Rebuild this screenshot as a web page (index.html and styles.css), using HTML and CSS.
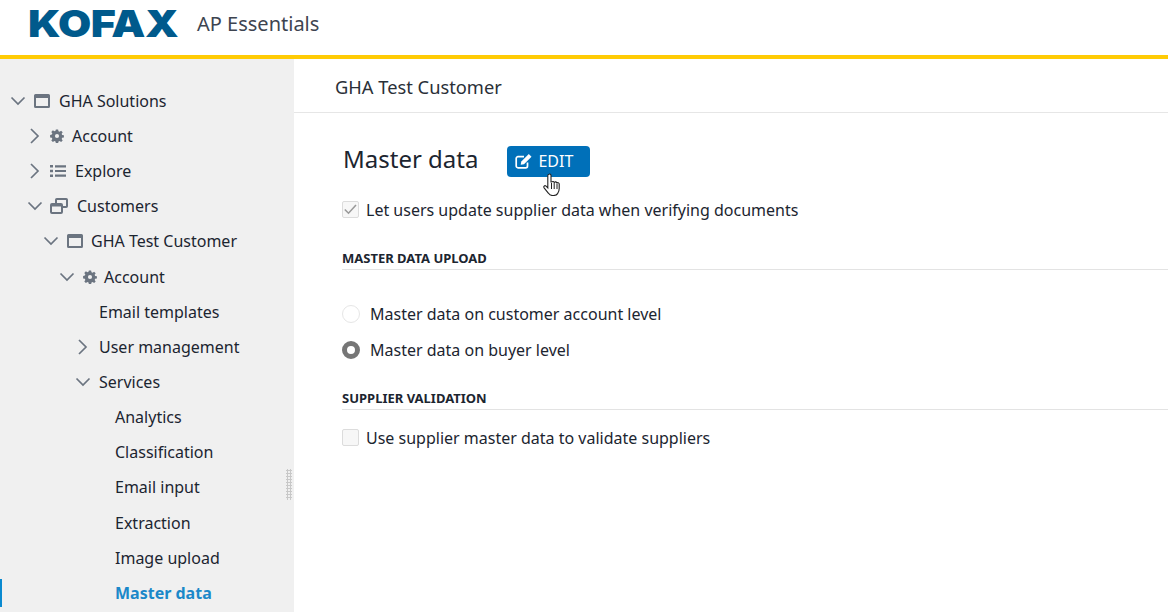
FILE: index.html
```html
<!DOCTYPE html>
<html lang="en">
<head>
<meta charset="utf-8">
<title>AP Essentials</title>
<link rel="stylesheet" href="styles.css">
</head>
<body>
<svg class="defs" width="0" height="0" aria-hidden="true">
  <symbol id="down" viewBox="0 0 16 16"><path d="M1.500 4.500 8 11l6.500-6.500" fill="none" stroke="#6b7480" stroke-width="1.700"/></symbol>
  <symbol id="right" viewBox="0 0 16 16"><path d="M4 1 11 8l-7 7" fill="none" stroke="#6b7480" stroke-width="1.700"/></symbol>
  <symbol id="win" viewBox="0 0 16 14"><path fill-rule="evenodd" d="M1.500 0h13A1.500 1.500 0 0 1 16 1.500v11a1.500 1.500 0 0 1-1.500 1.500h-13A1.500 1.500 0 0 1 0 12.500v-11A1.500 1.500 0 0 1 1.500 0zM2 4v8h12V4z" fill="#6b7480"/></symbol>
  <symbol id="gear" viewBox="-.5 -.5 15 15"><path fill-rule="evenodd" d="M5.800 0h2.400l.4 1.900 1.200.5 1.600-1.100 1.700 1.700-1.100 1.600.5 1.200 1.900.4v2.400l-1.900.4-.5 1.200 1.100 1.600-1.700 1.700-1.600-1.100-1.200.5-.4 1.900H5.800l-.4-1.900-1.200-.5-1.600 1.100-1.700-1.700 1.100-1.600-.5-1.200-1.900-.4V5.800l1.900-.4.5-1.200-1.100-1.600 1.700-1.700 1.600 1.100 1.200-.5zM7 4.800a2.200 2.200 0 1 0 0 4.400 2.200 2.200 0 0 0 0-4.400z" fill="#6b7480"/></symbol>
  <symbol id="list" viewBox="0 0 16 12"><path d="M0 0h3v2.600H0zM0 4.700h3v2.600H0zM0 9.400h3V12H0zM5 .2h11v2.200H5zM5 4.900h11v2.200H5zM5 9.600h11v2.200H5z" fill="#6b7480"/></symbol>
  <symbol id="copy" viewBox="0 0 18 16"><path d="M6 5V1.800A.800.800 0 0 1 6.800 1h9.400a.800.800 0 0 1 .8.800v6.400a.800.800 0 0 1-.8.800H12" fill="none" stroke="#6b7480" stroke-width="2"/><rect x="1" y="6" width="11" height="9" rx="1" fill="none" stroke="#6b7480" stroke-width="2"/><path d="M1 6h11v2.500H1z" fill="#6b7480"/></symbol>
</svg>

<header class="topbar">
  <span class="logo">KOFAX</span>
  <span class="product">AP Essentials</span>
</header>

<div class="layout">
  <nav class="sidebar">
    <div class="row d0"><svg class="chev"><use href="#down"/></svg><svg class="ico win"><use href="#win"/></svg><span>GHA Solutions</span></div>
    <div class="row d1"><svg class="chev"><use href="#right"/></svg><svg class="ico gear"><use href="#gear"/></svg><span>Account</span></div>
    <div class="row d1"><svg class="chev"><use href="#right"/></svg><svg class="ico list"><use href="#list"/></svg><span>Explore</span></div>
    <div class="row d1"><svg class="chev"><use href="#down"/></svg><svg class="ico copy"><use href="#copy"/></svg><span>Customers</span></div>
    <div class="row d2"><svg class="chev"><use href="#down"/></svg><svg class="ico win"><use href="#win"/></svg><span>GHA Test Customer</span></div>
    <div class="row d3"><svg class="chev"><use href="#down"/></svg><svg class="ico gear"><use href="#gear"/></svg><span>Account</span></div>
    <div class="row d4 leaf"><span>Email templates</span></div>
    <div class="row d4"><svg class="chev"><use href="#right"/></svg><span>User management</span></div>
    <div class="row d4"><svg class="chev"><use href="#down"/></svg><span>Services</span></div>
    <div class="row d5"><span>Analytics</span></div>
    <div class="row d5"><span>Classification</span></div>
    <div class="row d5"><span>Email input</span></div>
    <div class="row d5"><span>Extraction</span></div>
    <div class="row d5"><span>Image upload</span></div>
    <div class="row d5 active"><span>Master data</span></div>
    <div class="grip"></div>
  </nav>

  <main class="main">
    <div class="crumb">GHA Test Customer</div>
    <div class="content">
      <div class="title-row">
        <h1>Master data</h1>
        <button class="edit" type="button">
          <svg class="edit-ico" viewBox="0 0 17 15"><path d="M12.500 8.500V12a1.800 1.800 0 0 1-1.800 1.800H3A1.800 1.800 0 0 1 1.200 12V4.500A1.800 1.800 0 0 1 3 2.700h6" fill="none" stroke="#fff" stroke-width="1.700"/><path d="M13.800 0 16.500 2.700 9 10.200l-3.300.6.600-3.300z" fill="#fff"/></svg>
          EDIT
        </button>
        <svg class="hand" viewBox="0 0 19 23"><path d="M6 1.200c1-.4 2 .2 2 1.300V9h.8c.6-.8 1.900-.7 2.300.2l.4.1c.7-.7 2-.5 2.300.5h.4c.9-.4 2 .2 2 1.200v4.500c0 2.500-.6 3.800-1.600 5.100-.8 1.200-2.200 1.900-4.100 1.900H9.500c-1.800 0-3-.8-4-2.200L1.100 14.800c-.9-1.300.5-2.800 2-1.700l1.700 1.700V2.600c0-.6.500-1.200 1.200-1.400z" fill="#fff" stroke="#222" stroke-width="1.100"/><path d="M8.500 10v6M11.200 10v6M14 10.500V16" stroke="#222" fill="none"/></svg>
      </div>

      <label class="check-row first"><span class="box checked"><svg viewBox="0 0 15 15"><path d="M1.800 7.500 5.500 11.200 13 3" fill="none" stroke="#9a9a9a" stroke-width="1.600"/></svg></span>Let users update supplier data when verifying documents</label>

      <h2 class="section upload">MASTER DATA UPLOAD</h2>
      <div class="radio-row r1"><span class="radio"></span>Master data on customer account level</div>
      <div class="radio-row r2"><span class="radio on"></span>Master data on buyer level</div>

      <h2 class="section validation">SUPPLIER VALIDATION</h2>
      <label class="check-row"><span class="box"></span>Use supplier master data to validate suppliers</label>
    </div>
  </main>
</div>
</body>
</html>
```
FILE: styles.css
```css
* { box-sizing: border-box; }
html, body { margin: 0; height: 100%; overflow: hidden; }
body { font-family: "Noto Sans", "Open Sans", sans-serif; font-size: 16px; color: #1c2530; background: #fff; }
.defs { position: absolute; }

.topbar { height: 59px; border-bottom: 4px solid #ffcb05; display: flex; align-items: center; padding: 0 0 8px 28px; background: #fff; }
.logo { font-family: Inter, sans-serif; font-weight: 900; font-size: 37px; line-height: 26px; color: #005a8c; width: 148px; display: inline-block; transform-origin: left center; transform: scaleX(1.16); letter-spacing: -.5px; }
.product { margin-left: 21px; font-size: 20px; color: #3d4450; }

.layout { display: flex; height: 553px; }
.sidebar { position: relative; width: 294px; flex: none; background: #f0f0f0; padding-top: 24.200px; overflow: hidden; }
.row { position: relative; height: 35.167px; display: flex; align-items: center; white-space: nowrap; }
.chev { width: 16px; height: 16px; flex: none; margin-right: 8px; }
.ico { flex: none; margin-right: 8px; }
.win { width: 16px; height: 14px; }
.gear { width: 14px; height: 14px; }
.list { width: 16px; height: 12px; margin-right: 9px; }
.copy { width: 18px; height: 16px; margin-right: 9px; }
.d0 { padding-left: 10px; }
.d0 .ico { margin-right: 9px; }
.d1 { padding-left: 27px; }
.d1 .ico { margin-left: -1px; }
.d2 { padding-left: 43px; }
.d3 { padding-left: 59px; }
.d3 .ico { margin-right: 7px; }
.d4 { padding-left: 75px; }
.d5 { padding-left: 115px; }
.leaf { padding-left: 99px; }
.active { font-weight: 700; color: #1b88c9; }
.active::before { content: ""; position: absolute; left: 0; top: 4px; width: 2px; height: 28px; background: #0a8ad0; }
.grip { position: absolute; left: 286px; top: 410px; width: 6px; height: 31px; background-image: radial-gradient(#c8c8c8 1px, transparent 1.200px); background-size: 3px 3px; }

.main { flex: 1; min-width: 0; }
.crumb { height: 53.500px; border-bottom: 1px solid #e6e6e6; padding: 14px 0 0 41px; font-size: 18.300px; line-height: 28px; color: #2a3038; }
.content { padding: 33px 0 0 48px; }
.title-row { position: relative; display: flex; align-items: flex-start; height: 32px; }
h1 { margin: 0 0 0 1px; font-size: 24px; font-weight: 400; line-height: 26px; color: #1c2530; }
.edit { margin-left: 29px; width: 83px; height: 31px; border: 0; border-radius: 4px; background: #0070b9; color: #fff; font: 16px "Noto Sans", sans-serif; display: flex; align-items: center; padding: 0 0 0 8px; }
.edit-ico { width: 17px; height: 15px; margin-right: 6px; }
.hand { position: absolute; left: 201px; top: 27px; width: 19px; height: 23px; }
.check-row { display: flex; align-items: center; height: 24px; }
.check-row.first { margin-top: 20px; }
.box { width: 17px; height: 17px; border: 1px solid #dcdcdc; border-radius: 2px; background: #f7f7f7; margin-right: 7px; flex: none; display: flex; }
.box svg { width: 15px; height: 15px; }
.section { margin: 0; font-size: 13px; font-weight: 700; line-height: 18px; color: #1c2530; padding-bottom: 2px; border-bottom: 1px solid #e3e3e3; }
.section.upload { margin-top: 27px; }
.section.validation { margin-top: 27px; margin-bottom: 16px; }
.radio-row { display: flex; align-items: center; height: 24px; }
.radio-row.r1 { margin-top: 32px; }
.radio-row.r2 { margin-top: 12px; }
.radio { width: 18px; height: 18px; border-radius: 50%; border: 1px solid #e6e6e6; background: #fff; margin-right: 10px; flex: none; }
.radio.on { border: 5.500px solid #767676; }
```
